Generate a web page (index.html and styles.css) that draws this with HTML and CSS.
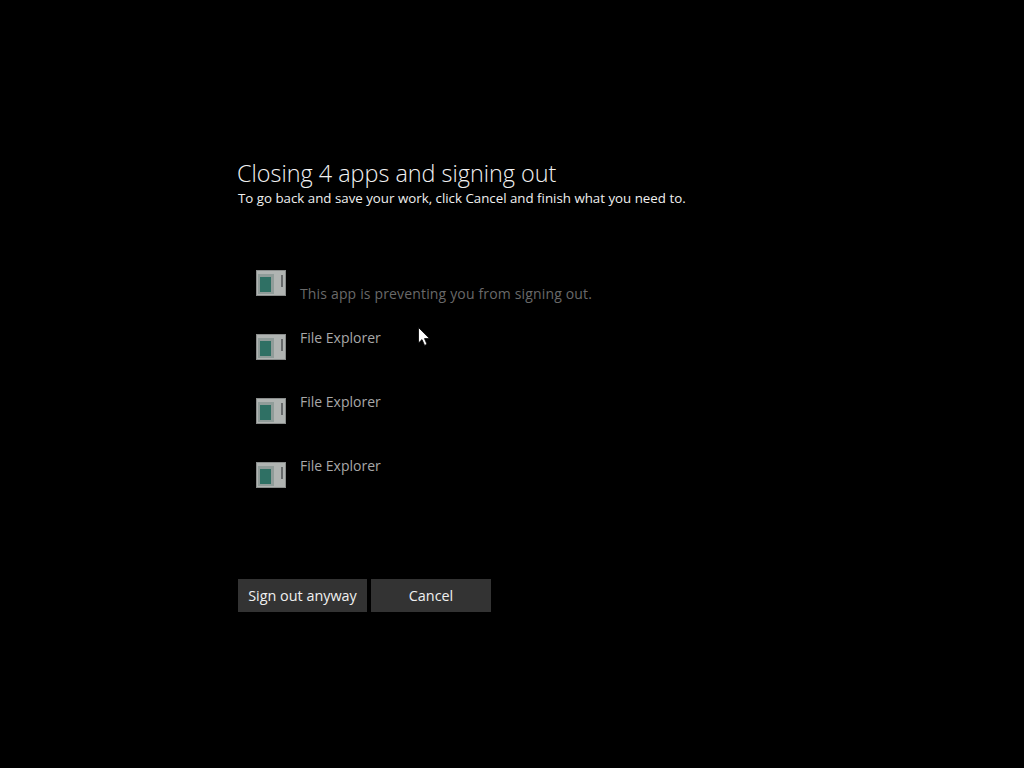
FILE: index.html
```html
<!DOCTYPE html>
<html lang="en">
<head>
<meta charset="utf-8">
<title>Closing apps</title>
<link rel="stylesheet" href="styles.css">
</head>
<body>
<svg class="defs" aria-hidden="true">
  <symbol id="app-icon" viewBox="0 0 30 26">
    <rect width="30" height="26" fill="#8a8d8c"/>
    <rect x="1" y="1" width="28" height="24" fill="#b0b4b2"/>
    <rect x="2" y="4" width="16" height="20" fill="#909c99"/>
    <rect x="4" y="7" width="11" height="15" fill="#2f7064"/>
    <rect x="25" y="5" width="2" height="12" fill="#66696a"/>
  </symbol>
</svg>
<main class="screen">
  <h1 class="title">Closing 4 apps and signing out</h1>
  <p class="subtitle">To go back and save your work, click Cancel and finish what you need to.</p>
  <ul class="apps">
    <li class="app app-first">
      <svg class="icon"><use href="#app-icon"/></svg>
      <span class="note">This app is preventing you from signing out.</span>
    </li>
    <li class="app">
      <svg class="icon"><use href="#app-icon"/></svg>
      <span class="name">File Explorer</span>
    </li>
    <li class="app">
      <svg class="icon"><use href="#app-icon"/></svg>
      <span class="name">File Explorer</span>
    </li>
    <li class="app">
      <svg class="icon"><use href="#app-icon"/></svg>
      <span class="name">File Explorer</span>
    </li>
  </ul>
  <div class="actions">
    <button class="btn btn-signout">Sign out anyway</button>
    <button class="btn btn-cancel">Cancel</button>
  </div>
</main>
<svg class="cursor" viewBox="0 0 12 19"><path d="M0.5 0.5V16L4 12.6L6.6 18.4L9 17.3L6.5 11.6H11.5Z" fill="#fff" stroke="#000" stroke-width="0.8"/></svg>
</body>
</html>
```
FILE: styles.css
```css
html, body {
  margin: 0;
  height: 100%;
  background: #000;
  overflow: hidden;
}
body {
  font-family: "Open Sans", "Noto Sans", sans-serif;
  color: #fff;
}
.defs {
  display: none;
}
.screen {
  padding: 157px 0 0 238px;
}
.title {
  margin: 0 0 0 -1px;
  font-size: 23.4px;
  line-height: 33px;
  font-weight: 300;
  color: #f2f2f2;
}
.subtitle {
  margin: 0;
  font-size: 13.3px;
  line-height: 16px;
  color: #f0f0f0;
}
.apps {
  list-style: none;
  margin: 62px 0 0;
  padding: 0 0 0 18px;
}
.app {
  display: flex;
  align-items: flex-start;
  height: 64px;
  gap: 14px;
}
.app-first {
  height: 57px;
}
.icon {
  width: 30px;
  height: 26px;
  flex: none;
  margin-top: 9px;
  filter: blur(0.6px);
}
.app-first .icon {
  margin-top: 2px;
}
.name {
  font-size: 14px;
  line-height: 20px;
  color: #a8a8a8;
  margin-top: 3px;
}
.note {
  font-size: 14px;
  line-height: 20px;
  letter-spacing: 0.16px;
  color: #696969;
  margin-top: 16px;
}
.actions {
  display: flex;
  gap: 4px;
  margin-top: 62px;
}
.btn {
  height: 33px;
  border: 0;
  padding: 0;
  background: #333;
  color: #f0f0f0;
  font-family: inherit;
  font-size: 14.4px;
}
.btn-signout {
  width: 129px;
}
.btn-cancel {
  width: 120px;
}
.cursor {
  position: absolute;
  left: 418px;
  top: 327px;
  width: 12px;
  height: 19px;
}
```
